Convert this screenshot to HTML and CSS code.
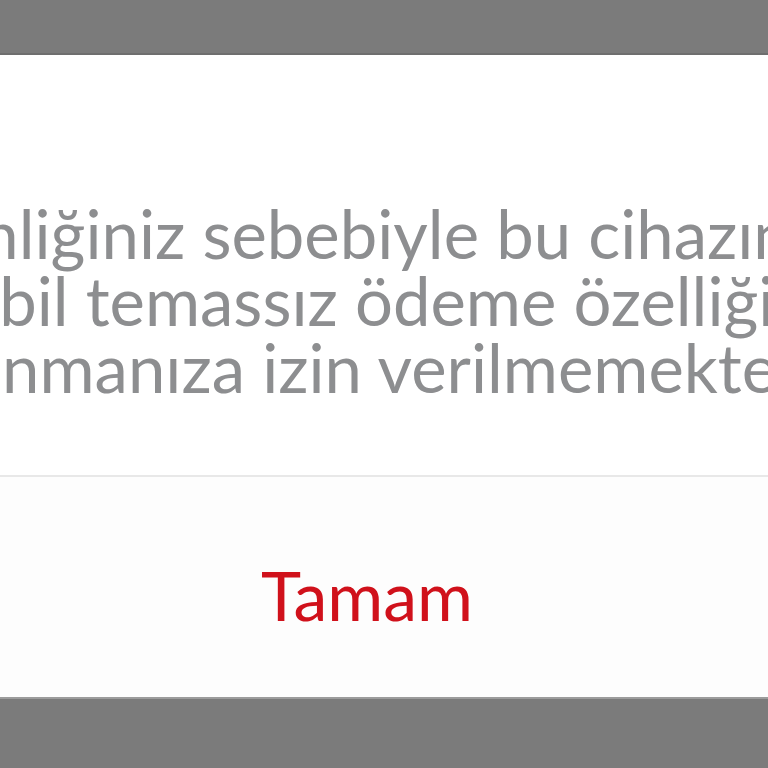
FILE: index.html
```html
<!DOCTYPE html>
<html lang="tr">
<head>
<meta charset="utf-8">
<link rel="stylesheet" href="styles.css">
</head>
<body>
<div class="screen">
  <div class="bar bar-top"></div>
  <div class="dialog">
    <div class="message">
      <p class="text">Güvenliğiniz sebebiyle bu cihazınızda<br>mobil temassız ödeme özelliğini<br>kullanmanıza izin verilmemektedir.</p>
    </div>
    <div class="divider"></div>
    <div class="actions">
      <span class="btn">Tamam</span>
    </div>
  </div>
  <div class="bar bar-bottom"></div>
</div>
</body>
</html>
```
FILE: styles.css
```css
html, body {
  margin: 0;
  padding: 0;
  width: 768px;
  height: 768px;
  overflow: hidden;
  background: #7b7b7b;
}
.screen {
  display: flex;
  flex-direction: column;
  width: 768px;
  height: 768px;
  overflow: hidden;
}
.bar {
  background: #7b7b7b;
  flex: none;
}
.bar-top {
  height: 53px;
  border-bottom: 2px solid #6e6e6e;
}
.bar-bottom {
  flex: 1;
  border-top: 2px solid #9c9c9c;
}
.dialog {
  background: #ffffff;
  height: 642px;
  display: flex;
  flex-direction: column;
  font-family: "Lato", "Open Sans", sans-serif;
}
.message {
  height: 420px;
  display: flex;
  justify-content: center;
  box-sizing: border-box;
  padding-top: 145px;
}
.text {
  margin: 0 0 0 -34px;
  flex: none;
  white-space: nowrap;
  text-align: center;
  font-size: 67px;
  line-height: 67px;
  color: #8d8e90;
}
.divider {
  height: 2px;
  background: #e8e8e8;
  flex: none;
}
.actions {
  flex: 1;
  display: flex;
  justify-content: center;
  align-items: flex-start;
  padding-top: 84px;
  background: #fdfdfd;
}
.btn {
  margin-left: -34px;
  font-size: 68px;
  line-height: 68px;
  color: #d0111b;
}
```
